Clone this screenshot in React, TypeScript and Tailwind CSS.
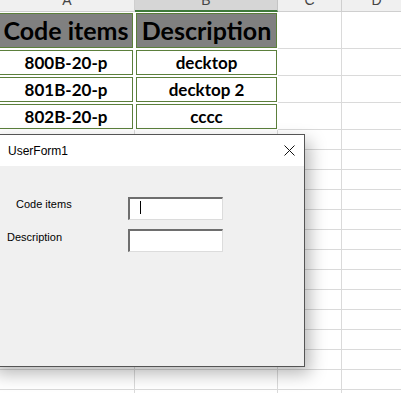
const cols = [
  { key: 'A', w: 135 },
  { key: 'B', w: 143 },
  { key: 'C', w: 64 },
  { key: 'D', w: 70 },
]

const items = [
  { code: '800B-20-p', desc: 'decktop' },
  { code: '801B-20-p', desc: 'decktop 2' },
  { code: '802B-20-p', desc: 'cccc' },
]

const sheetFont = { fontFamily: 'Lato, "Liberation Sans", sans-serif' }
const formFont = { fontFamily: '"Liberation Sans", Arial, sans-serif' }

function EmptyCells() {
  return (
    <>
      <div className="w-[64px] shrink-0 border-r border-b border-[#dadada]" />
      <div className="w-[70px] shrink-0 border-b border-[#dadada]" />
    </>
  )
}

function TableRow({ a, b, h, head }: { a: string; b: string; h: string; head?: boolean }) {
  const box = head
    ? 'flex h-full items-center justify-center border border-[#5b7f3b] bg-[#808080] font-bold text-black'
    : 'flex h-full items-center justify-center border border-[#5b7f3b] bg-white font-bold text-black'
  const size = head ? 'text-[25px]' : 'text-[17px]'
  return (
    <div className={`flex shrink-0 ${h}`}>
      <div className="w-[135px] shrink-0 py-px pr-[2px] pl-0">
        <div className={`${box} ${size} -ml-px`}>{a}</div>
      </div>
      <div className="w-[143px] shrink-0 p-px">
        <div className={`${box} ${size}`}>{b}</div>
      </div>
      <EmptyCells />
    </div>
  )
}

export default function App() {
  return (
    <div className="relative h-[393px] w-[401px] overflow-hidden bg-white" style={sheetFont}>
      {/* column headers */}
      <div className="flex h-[12px] overflow-hidden text-[14px] leading-[14px] text-[#444]" style={formFont}>
        {cols.map((c) => (
          <div
            key={c.key}
            style={{ width: c.w }}
            className={
              c.key === 'B'
                ? 'flex shrink-0 justify-center border-r border-b-2 border-r-[#c4c4c4] border-b-[#3f7a3a] bg-[#d6d6d6]'
                : 'flex shrink-0 justify-center border-r border-b border-[#cfcfcf] bg-[#f0f0f0]'
            }
          >
            <span className="-mt-[7px]">{c.key}</span>
          </div>
        ))}
      </div>

      <TableRow a="Code items" b="Description" h="h-[37px]" head />
      {items.map((it) => (
        <TableRow key={it.code} a={it.code} b={it.desc} h="h-[27px]" />
      ))}

      {Array.from({ length: 14 }).map((_, i) => (
        <div key={i} className="flex h-[20px] shrink-0">
          <div className="w-[135px] shrink-0 border-r border-b border-[#dadada]" />
          <div className="w-[143px] shrink-0 border-r border-b border-[#dadada]" />
          <EmptyCells />
        </div>
      ))}

      {/* UserForm window */}
      <div
        className="absolute top-[134px] left-[-10px] flex h-[233px] w-[315px] flex-col border border-[#555] bg-[#f0f0f0] shadow-[5px_7px_16px_rgba(0,0,0,0.28)]"
        style={formFont}
      >
        <div className="flex h-[31px] shrink-0 items-center justify-between bg-white pr-[9px] pl-[17px] text-[12px] text-black">
          <span>UserForm1</span>
          <svg width="11" height="11" viewBox="0 0 11 11" fill="none" stroke="#111" strokeWidth="1">
            <path d="M0.5 0.5 L10.5 10.5 M10.5 0.5 L0.5 10.5" />
          </svg>
        </div>
        <div className="flex flex-col gap-[9px] pt-[31px] text-[11px] leading-[14px] text-black">
          <div className="flex h-[23px]">
            <span className="w-[137px] shrink-0 pl-[25px]">Code items</span>
            <div className="flex h-[23px] w-[95px] border-t-2 border-l-2 border-r border-b border-t-[#6e6e6e] border-l-[#6e6e6e] border-r-[#dcdcdc] border-b-[#dcdcdc] bg-white">
              <span className="mt-[2px] ml-[10px] h-[13px] w-px bg-black" />
            </div>
          </div>
          <div className="flex h-[23px]">
            <span className="w-[137px] shrink-0 pt-px pl-[16px]">Description</span>
            <div className="h-[23px] w-[95px] border-t-2 border-l-2 border-r border-b border-t-[#6e6e6e] border-l-[#6e6e6e] border-r-[#dcdcdc] border-b-[#dcdcdc] bg-white" />
          </div>
        </div>
      </div>
    </div>
  )
}
